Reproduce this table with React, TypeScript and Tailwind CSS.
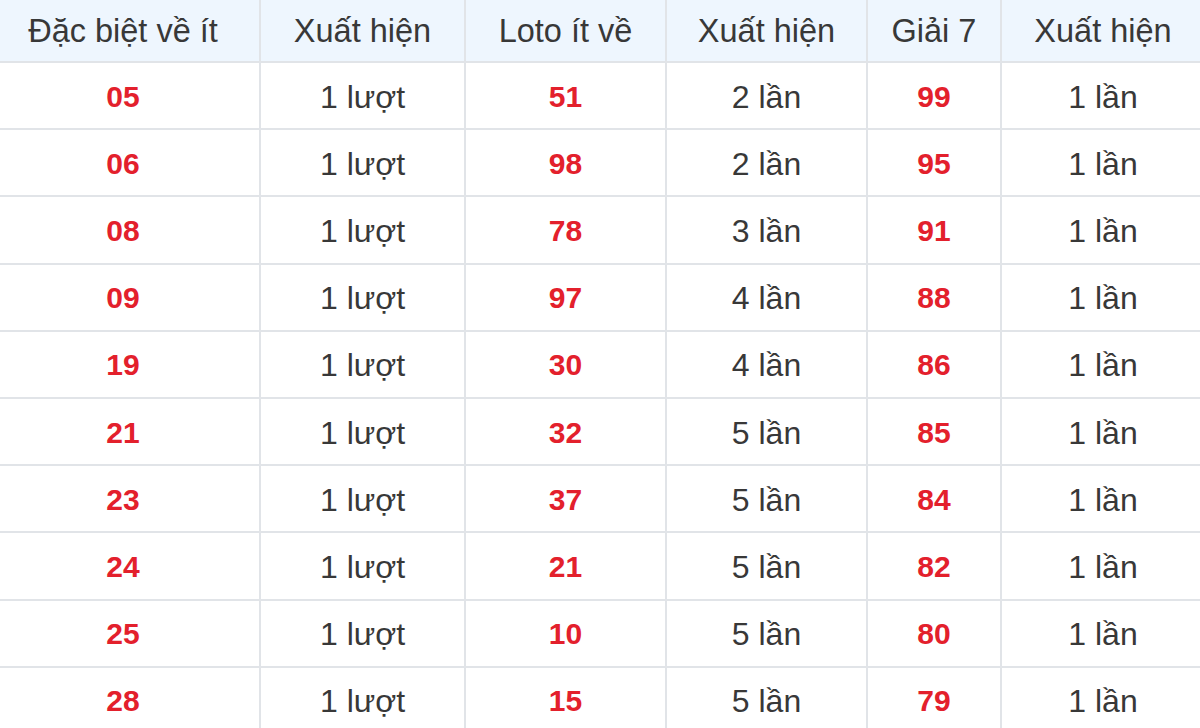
const rows = [
  ["05", "1 lượt", "51", "2 lần", "99", "1 lần"],
  ["06", "1 lượt", "98", "2 lần", "95", "1 lần"],
  ["08", "1 lượt", "78", "3 lần", "91", "1 lần"],
  ["09", "1 lượt", "97", "4 lần", "88", "1 lần"],
  ["19", "1 lượt", "30", "4 lần", "86", "1 lần"],
  ["21", "1 lượt", "32", "5 lần", "85", "1 lần"],
  ["23", "1 lượt", "37", "5 lần", "84", "1 lần"],
  ["24", "1 lượt", "21", "5 lần", "82", "1 lần"],
  ["25", "1 lượt", "10", "5 lần", "80", "1 lần"],
  ["28", "1 lượt", "15", "5 lần", "79", "1 lần"],
];

const headers = ["Đặc biệt về ít", "Xuất hiện", "Loto ít về", "Xuất hiện", "Giải 7", "Xuất hiện"];
const widths = ["w-[274px]", "w-[205px]", "w-[201px]", "w-[201px]", "w-[134px]", "w-[204px]"];

export default function App() {
  return (
    <div className="w-[1200px] h-[728px] overflow-hidden bg-white font-['Liberation_Sans',Arial,sans-serif]">
      <table className="ml-[-15px] w-[1219px] table-fixed border-collapse text-center">
        <colgroup>
          {widths.map((w, i) => (
            <col key={i} className={w} />
          ))}
        </colgroup>
        <thead>
          <tr className="h-[62px] bg-[#eef6fe]">
            {headers.map((h, i) => (
              <th
                key={i}
                className="border-2 border-t-0 border-[#e1e4e8] pt-[2px] text-[32.5px] font-normal text-[#383838]"
              >
                {h}
              </th>
            ))}
          </tr>
        </thead>
        <tbody>
          {rows.map((r, i) => (
            <tr key={i} className="h-[67.2px]">
              {r.map((c, j) => (
                <td
                  key={j}
                  className={
                    j % 2 === 0
                      ? "border-2 border-[#e1e4e8] pt-[1px] text-[30px] font-bold text-[#e3202c]"
                      : "border-2 border-[#e1e4e8] pt-[2px] text-[32px] text-[#383838]"
                  }
                >
                  {c}
                </td>
              ))}
            </tr>
          ))}
        </tbody>
      </table>
    </div>
  );
}
